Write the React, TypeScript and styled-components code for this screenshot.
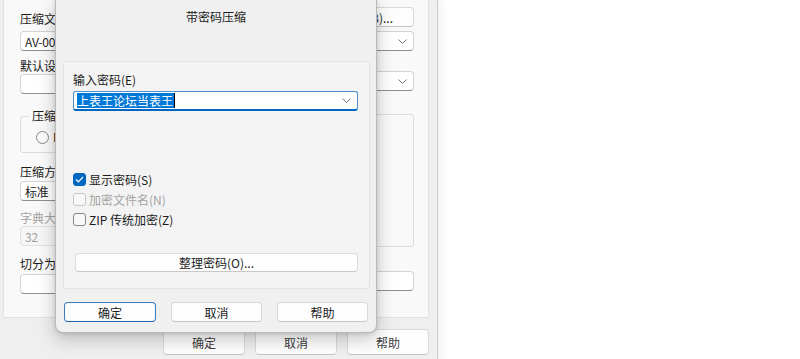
import styled, { createGlobalStyle } from 'styled-components';

const GlobalStyle = createGlobalStyle`
  html, body {
    margin: 0;
    padding: 0;
    background: #ffffff;
  }
  body {
    font-family: 'Noto Sans CJK SC', 'Liberation Sans', sans-serif;
    font-size: 12px;
    color: #1b1b1b;
  }
`;

const Desktop = styled.div`
  position: relative;
  width: 800px;
  height: 359px;
  overflow: hidden;
  background: linear-gradient(90deg, #f4f4f4 0px, #ffffff 30px);
`;

// ---- background window (the compression settings dialog) ----
const BackWindow = styled.div`
  position: absolute;
  left: 0;
  top: 0;
  width: 437px;
  height: 380px;
  background: #efefef;
  border-right: 1px solid #cfcfcf;
  box-shadow: 2px 0 10px rgba(0, 0, 0, 0.08);
  display: flex;
  flex-direction: column;
`;

const TabPage = styled.div`
  box-sizing: border-box;
  width: 426px;
  height: 318px;
  margin-left: 3px;
  background: #f9f9f9;
  border: 1px solid #e2e2e2;
  border-top: none;
  padding: 0 14px 0 16px;
  display: grid;
  grid-template-columns: 190px 1fr;
  column-gap: 16px;
`;

const Column = styled.div`
  display: flex;
  flex-direction: column;
`;

const Label = styled.div<{ $top: number; $disabled?: boolean }>`
  margin-top: ${(p) => p.$top}px;
  height: 16px;
  line-height: 16px;
  white-space: nowrap;
  color: ${(p) => (p.$disabled ? '#a3a3a3' : '#1b1b1b')};
`;

const Field = styled.div<{ $top: number; $disabled?: boolean }>`
  box-sizing: border-box;
  margin-top: ${(p) => p.$top}px;
  height: 20px;
  padding: 0 6px 0 4px;
  display: flex;
  align-items: center;
  justify-content: space-between;
  background: ${(p) => (p.$disabled ? '#f6f6f6' : '#ffffff')};
  border: 1px solid ${(p) => (p.$disabled ? '#e0e0e0' : '#d4d4d4')};
  border-bottom-color: ${(p) => (p.$disabled ? '#e0e0e0' : '#8f8f8f')};
  border-radius: 4px;
  color: ${(p) => (p.$disabled ? '#9c9c9c' : '#1b1b1b')};
  white-space: nowrap;
  overflow: hidden;
  letter-spacing: -0.2px;
`;

const GroupBox = styled.div<{ $top: number; $height: number }>`
  position: relative;
  box-sizing: border-box;
  margin-top: ${(p) => p.$top}px;
  height: ${(p) => p.$height}px;
  border: 1px solid #dcdcdc;
  border-radius: 3px;
  padding: 13px 0 0 15px;
`;

const Legend = styled.span`
  position: absolute;
  top: -9px;
  left: 8px;
  padding: 0 3px;
  background: #f9f9f9;
  line-height: 16px;
`;

const RadioRow = styled.div`
  display: flex;
  align-items: center;
  gap: 4px;
  line-height: 14px;
`;

const Radio = styled.span`
  box-sizing: border-box;
  width: 13px;
  height: 13px;
  border: 1px solid #8a8a8a;
  border-radius: 50%;
  background: #fbfbfb;
`;

const BackButton = styled.div<{ $width?: number }>`
  box-sizing: border-box;
  width: ${(p) => (p.$width ? `${p.$width}px` : 'auto')};
  height: 20px;
  display: flex;
  align-items: center;
  justify-content: center;
  background: #fdfdfd;
  border: 1px solid #dadada;
  border-bottom-color: #c4c4c4;
  border-radius: 4px;
  white-space: nowrap;
`;

const TopRight = styled.div`
  margin-top: 7px;
  display: flex;
  justify-content: flex-end;
`;

const BottomBar = styled.div`
  display: flex;
  justify-content: flex-end;
  gap: 10px;
  padding: 11px 8px 0 0;
`;

const BigButton = styled(BackButton)`
  width: 82px;
  height: 26px;
  color: #3a3a3a;
`;

const Chevron = ({ color = '#6d6d6d' }: { color?: string }) => (
  <svg width="9" height="5" viewBox="0 0 9 5" style={{ flexShrink: 0 }}>
    <path d="M0.5 0.5 L4.5 4.5 L8.5 0.5" fill="none" stroke={color} strokeWidth="1" />
  </svg>
);

// ---- front dialog (带密码压缩) ----
const Dialog = styled.div`
  position: absolute;
  left: 55px;
  top: -1px;
  box-sizing: border-box;
  width: 322px;
  height: 334px;
  background: #f0f0f0;
  border: 1px solid #b9b9b9;
  border-top: none;
  border-radius: 0 0 8px 8px;
  box-shadow: 0 6px 18px rgba(0, 0, 0, 0.22), 0 1px 4px rgba(0, 0, 0, 0.12);
  display: flex;
  flex-direction: column;
`;

const TitleBar = styled.div`
  height: 34px;
  display: flex;
  align-items: center;
  justify-content: center;
  color: #1b1b1b;
`;

const Panel = styled.div`
  box-sizing: border-box;
  margin: 28px 6px 0 7px;
  height: 228px;
  background: #f3f3f3;
  border: 1px solid #e3e3e3;
  border-radius: 3px;
  padding: 10px 11px 0 9px;
  display: flex;
  flex-direction: column;
`;

const FieldLabel = styled.div`
  line-height: 16px;
`;

const Combo = styled.div`
  box-sizing: border-box;
  margin-top: 3px;
  height: 20px;
  padding: 0 6px 0 3px;
  display: flex;
  align-items: center;
  justify-content: space-between;
  background: #ffffff;
  border: 1px solid #4f8fcf;
  border-bottom: 2px solid #0067c0;
  border-radius: 3px;
`;

const Selected = styled.span`
  background: #0078d7;
  color: #ffffff;
  line-height: 15px;
  padding-right: 1px;
  border-right: 1px solid #000;
`;

const CheckList = styled.div`
  margin-top: 58px;
  display: flex;
  flex-direction: column;
`;

const CheckRow = styled.div<{ $disabled?: boolean }>`
  height: 20px;
  display: flex;
  align-items: center;
  gap: 3px;
  color: ${(p) => (p.$disabled ? '#a3a3a3' : '#1b1b1b')};
`;

const Box = styled.span<{ $checked?: boolean; $disabled?: boolean }>`
  box-sizing: border-box;
  width: 13px;
  height: 13px;
  border-radius: 3px;
  display: flex;
  align-items: center;
  justify-content: center;
  background: ${(p) => (p.$checked ? '#0067c0' : '#f8f8f8')};
  border: 1px solid
    ${(p) => (p.$checked ? '#0067c0' : p.$disabled ? '#c9c9c9' : '#858585')};
`;

const ManageButton = styled.div`
  box-sizing: border-box;
  margin: 24px 0 0 2px;
  height: 19px;
  display: flex;
  align-items: center;
  justify-content: center;
  background: #fdfdfd;
  border: 1px solid #dcdcdc;
  border-bottom-color: #c8c8c8;
  border-radius: 4px;
`;

const ButtonRow = styled.div`
  display: grid;
  grid-template-columns: 92px 91px 91px;
  column-gap: 15px;
  padding: 13px 0 0 8px;
`;

const DialogButton = styled.div<{ $default?: boolean }>`
  box-sizing: border-box;
  height: 20px;
  display: flex;
  align-items: center;
  justify-content: center;
  background: #fdfdfd;
  border: 1px solid ${(p) => (p.$default ? '#3d7ec2' : '#d8d8d8')};
  border-bottom-color: ${(p) => (p.$default ? '#1f64ae' : '#c4c4c4')};
  border-radius: 4px;
  box-shadow: ${(p) => (p.$default ? 'inset 0 0 0 1px #f4f8fc' : 'none')};
`;

const CheckMark = () => (
  <svg width="9" height="7" viewBox="0 0 9 7">
    <path d="M1 3.5 L3.4 5.8 L8 1" fill="none" stroke="#ffffff" strokeWidth="1.2" />
  </svg>
);

export default function App() {
  return (
    <>
      <GlobalStyle />
      <Desktop>
        <BackWindow>
          <TabPage>
            <Column>
              <Label $top={11}>压缩文件名(A)</Label>
              <Field $top={4}>AV-002.rar</Field>
              <Label $top={7}>默认设置</Label>
              <Field $top={0}>
                <span />
                <Chevron />
              </Field>
              <GroupBox $top={22} $height={37}>
                <Legend>压缩文件格式</Legend>
                <RadioRow>
                  <Radio />
                  RAR
                </RadioRow>
              </GroupBox>
              <Label $top={11}>压缩方式(C)</Label>
              <Field $top={1}>
                标准
                <Chevron />
              </Field>
              <Label $top={9} $disabled>
                字典大小(I)
              </Label>
              <Field $top={0} $disabled>
                32
              </Field>
              <Label $top={10}>切分为分卷(V)，大小</Label>
              <Field $top={2} />
            </Column>
            <Column>
              <TopRight>
                <BackButton $width={92}>浏览(B)...</BackButton>
              </TopRight>
              <Field $top={4}>
                <span />
                <Chevron />
              </Field>
              <Label $top={4}>更新方式(U)</Label>
              <Field $top={0}>
                <span />
                <Chevron />
              </Field>
              <GroupBox $top={23} $height={133}>
                <Legend>压缩选项</Legend>
              </GroupBox>
              <Field $top={24} />
            </Column>
          </TabPage>
          <BottomBar>
            <BigButton>确定</BigButton>
            <BigButton>取消</BigButton>
            <BigButton>帮助</BigButton>
          </BottomBar>
        </BackWindow>

        <Dialog>
          <TitleBar>带密码压缩</TitleBar>
          <Panel>
            <FieldLabel>输入密码(E)</FieldLabel>
            <Combo>
              <Selected>上表王论坛当表王</Selected>
              <Chevron color="#7a7a7a" />
            </Combo>
            <CheckList>
              <CheckRow>
                <Box $checked>
                  <CheckMark />
                </Box>
                显示密码(S)
              </CheckRow>
              <CheckRow $disabled>
                <Box $disabled />
                加密文件名(N)
              </CheckRow>
              <CheckRow>
                <Box />
                ZIP 传统加密(Z)
              </CheckRow>
            </CheckList>
            <ManageButton>整理密码(O)...</ManageButton>
          </Panel>
          <ButtonRow>
            <DialogButton $default>确定</DialogButton>
            <DialogButton>取消</DialogButton>
            <DialogButton>帮助</DialogButton>
          </ButtonRow>
        </Dialog>
      </Desktop>
    </>
  );
}
